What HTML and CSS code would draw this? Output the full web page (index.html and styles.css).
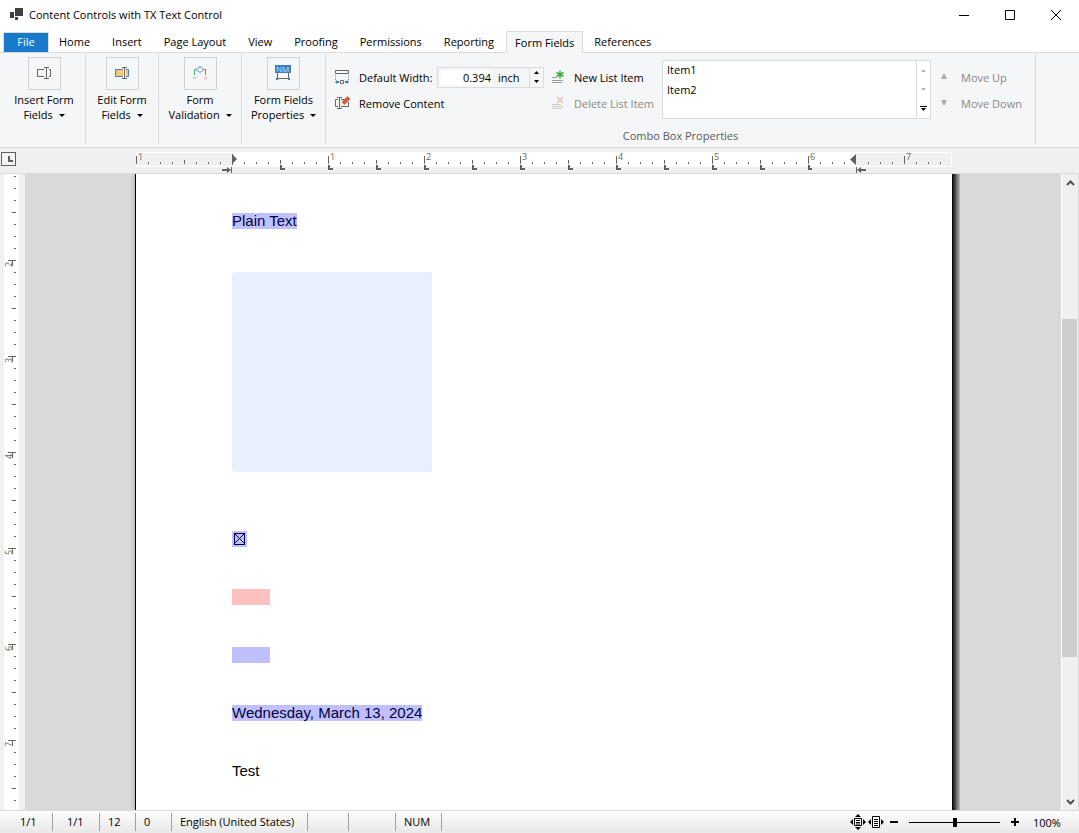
FILE: index.html
```html
<!DOCTYPE html>
<html lang="en">
<head>
  <meta charset="UTF-8">
  <meta name="viewport" content="width=device-width, initial-scale=1.0">
  <title>Content Controls with TX Text Control</title>
  <link rel="stylesheet" href="styles.css">
</head>
<body>
  <header class="titlebar">
    <svg class="app-icon" width="14" height="14" viewBox="0 0 14 14" fill="#404040">
      <path d="M0 4h4v6H0zM5 0h8v8H5zM5 9h3v3H5z"/>
    </svg>
    <h1>Content Controls with TX Text Control</h1>
    <div class="window-buttons">
      <button type="button" aria-label="Minimize">
        <svg width="12" height="12" viewBox="0 0 12 12"><path d="M1 6.500h10" stroke="#000"/></svg>
      </button>
      <button type="button" aria-label="Maximize">
        <svg width="12" height="12" viewBox="0 0 12 12"><path d="M1.500 1.500h9v9h-9z" fill="none" stroke="#000"/></svg>
      </button>
      <button type="button" aria-label="Close">
        <svg width="12" height="12" viewBox="0 0 12 12"><path d="M1 1l10 10M11 1L1 11" stroke="#000"/></svg>
      </button>
    </div>
  </header>

  <nav class="tabs">
    <button type="button" class="tab file">File</button>
    <button type="button" class="tab">Home</button>
    <button type="button" class="tab">Insert</button>
    <button type="button" class="tab">Page Layout</button>
    <button type="button" class="tab">View</button>
    <button type="button" class="tab">Proofing</button>
    <button type="button" class="tab">Permissions</button>
    <button type="button" class="tab">Reporting</button>
    <button type="button" class="tab active">Form Fields</button>
    <button type="button" class="tab">References</button>
  </nav>

  <section class="ribbon">
    <div class="group group-insert">
      <button type="button" class="big-button">
        <span class="icon-box">
          <svg width="17" height="17" viewBox="0 0 17 17" fill="none" stroke="#666">
            <path d="M8 4.500H1.500v7H8M13 4.500h1.500v7H13M10.500 2.500v11M8 2.500h5M8 13.500h5"/>
          </svg>
        </span>
        <span>Insert Form<br>Fields <i class="caret"></i></span>
      </button>
    </div>
    <div class="group group-edit">
      <button type="button" class="big-button">
        <span class="icon-box">
          <svg width="17" height="17" viewBox="0 0 17 17" fill="none">
            <path d="M1 4h8v8H1zM12 4h3v8h-3z" fill="#efc97c"/>
            <path d="M9 4.500H1.500v7H9M12 4.500h2.500v7H12" stroke="#4a7fb8"/>
            <path d="M10.500 2.500v11M8 2.500h5M8 13.500h5" stroke="#666"/>
          </svg>
        </span>
        <span>Edit Form<br>Fields <i class="caret"></i></span>
      </button>
    </div>
    <div class="group group-validation">
      <button type="button" class="big-button">
        <span class="icon-box">
          <svg width="17" height="17" viewBox="0 0 17 17" fill="none">
            <path d="M8 1.500l4 3-4 3-4-3z" stroke="#5b8fc7"/>
            <path d="M4 4.500H2.500V10" stroke="#4db84d"/>
            <path d="M1 12l1.500 2L4.500 11.500" stroke="#8fd48f"/>
            <path d="M12 4.500h1.500V10" stroke="#d9603f"/>
            <path d="M12 11.500l3 3M15 11.500l-3 3" stroke="#efac9c"/>
          </svg>
        </span>
        <span>Form<br>Validation <i class="caret"></i></span>
      </button>
    </div>
    <div class="group group-properties">
      <button type="button" class="big-button">
        <span class="icon-box">
          <svg width="17" height="17" viewBox="0 0 17 17">
            <path d="M0 0h16v8H0z" fill="#3f7fbf"/>
            <text x="1" y="7" class="icon-text">NM</text>
            <path d="M2.500 8v5.500h11V8" fill="none" stroke="#666"/>
            <path d="M1 13h2v2H1zM13 13h2v2h-2z" fill="#3f7fbf"/>
          </svg>
        </span>
        <span>Form Fields<br>Properties <i class="caret"></i></span>
      </button>
    </div>

    <div class="group combo">
      <div class="combo-body">
        <div class="column column-width">
          <div class="row">
            <svg width="16" height="16" viewBox="0 0 16 16" fill="none">
              <path d="M.5 1.500h13v3H.5z" stroke="#666"/>
              <path d="M.5 6v5M13.500 6v5" stroke="#888" stroke-dasharray="1 1"/>
              <path d="M5.500 11.500h3v3h-3z" stroke="#666"/>
              <path d="M0 13l2-2v1h2v2H2v1zM14 13l-2-2v1h-2v2h2v1z" fill="#3f7fbf"/>
            </svg>
            <label for="default-width">Default Width:</label>
            <div class="spinner">
              <input id="default-width" type="text" value="0.394">
              <span class="unit">inch</span>
              <div class="spin-buttons">
                <button type="button" aria-label="Increase"><svg width="5" height="3" viewBox="0 0 5 3"><path d="M0 3h5L2.500 0z"/></svg></button>
                <button type="button" aria-label="Decrease"><svg width="5" height="3" viewBox="0 0 5 3"><path d="M0 0h5L2.500 3z"/></svg></button>
              </div>
            </div>
          </div>
          <button type="button" class="row">
            <svg width="16" height="16" viewBox="0 0 16 16" fill="none">
              <path d="M3 4.500H.5v7H3M6 4.500h4M6 11.500h7.500V7M4.500 2.500v11M2 2.500h5M2 13.500h5" stroke="#666"/>
              <path d="M8 8.500L14 2.500" stroke="#d9603f" stroke-width="4"/>
            </svg>
            <span>Remove Content</span>
          </button>
        </div>

        <div class="column column-items">
          <button type="button" class="row">
            <svg width="16" height="16" viewBox="0 0 16 16" fill="none">
              <path d="M0 8.500h5M0 11.500h11M0 13.500h10" stroke="#999"/>
              <path d="M8 1.500v8M4.500 3.500l7 4M11.500 3.500l-7 4" stroke="#43a843" stroke-width="1.500"/>
            </svg>
            <span>New List Item</span>
          </button>
          <button type="button" class="row" disabled>
            <svg width="16" height="16" viewBox="0 0 16 16" fill="none">
              <path d="M0 9.500h9M0 11.500h11M0 13.500h10" stroke="#ccc"/>
              <path d="M5 2l6 6M11 2L5 8" stroke="#eebcb0" stroke-width="1.500"/>
            </svg>
            <span>Delete List Item</span>
          </button>
        </div>

        <div class="gallery">
          <ul>
            <li>Item1</li>
            <li>Item2</li>
          </ul>
          <div class="gallery-buttons">
            <button type="button" aria-label="Scroll up" disabled><svg width="5" height="3" viewBox="0 0 5 3"><path d="M0 3h5L2.500 0z"/></svg></button>
            <button type="button" aria-label="Scroll down" disabled><svg width="5" height="3" viewBox="0 0 5 3"><path d="M0 0h5L2.500 3z"/></svg></button>
            <button type="button" aria-label="More"><svg width="7" height="5" viewBox="0 0 7 5"><path d="M0 0h7v1H0zM1 2h5L3.500 5z"/></svg></button>
          </div>
        </div>

        <div class="column column-move">
          <button type="button" class="row" disabled>
            <svg width="16" height="16" viewBox="0 0 16 16" fill="#aaa"><path d="M1 10h6L4 4z"/></svg>
            <span>Move Up</span>
          </button>
          <button type="button" class="row" disabled>
            <svg width="16" height="16" viewBox="0 0 16 16" fill="#aaa"><path d="M1 5h6l-3 6z"/></svg>
            <span>Move Down</span>
          </button>
        </div>
      </div>
      <p class="group-title">Combo Box Properties</p>
    </div>
  </section>

  <div class="ruler">
    <button type="button" class="tab-type" aria-label="Tab type">
      <svg width="13" height="11" viewBox="0 0 13 11"><path d="M6 2h2v4h3v2H6z" fill="#606060"/></svg>
    </button>
    <svg class="ruler-scale" width="828" height="21" viewBox="0 0 828 21">
      <defs>
        <pattern id="ticks" width="96" height="21" patternUnits="userSpaceOnUse">
          <path d="M.5 4v8M48.500 8v4M12.500 10v2M24.500 10v2M36.500 10v2M60.500 10v2M72.500 10v2M84.500 10v2" stroke="#666"/>
        </pattern>
        <pattern id="stops" width="48" height="21" patternUnits="userSpaceOnUse">
          <path d="M0 13h2v3h3v2H0z" fill="#606060"/>
        </pattern>
      </defs>
      <g transform="translate(12 0)">
        <path d="M0 0h816v15H0z" fill="#fff"/>
        <path d="M1 1h95v13H1zM720 1h95v13h-95z" fill="#f0f0f0"/>
        <path d="M0 0h96v21H0zM97 0h623v21H97zM721 0h94v21h-94z" fill="url(#ticks)"/>
        <path d="M144 12h532v7H144z" fill="url(#stops)"/>
        <g class="ruler-number">
          <text x="2" y="8">1</text>
          <text x="194" y="8">1</text>
          <text x="290" y="8">2</text>
          <text x="386" y="8">3</text>
          <text x="482" y="8">4</text>
          <text x="578" y="8">5</text>
          <text x="674" y="8">6</text>
          <text x="770" y="8">7</text>
        </g>
        <path d="M96 2l5 5-5 5zM720 2l-6 5.500 6 5.500z" fill="#606060"/>
        <path d="M96.500 2v11M95.500 15v6M720.500 15v6" stroke="#606060"/>
        <path d="M86 17h5v-2l4 3-4 3v-2h-5zM730 17h-5v-2l-4 3 4 3v-2h5z" fill="#606060"/>
      </g>
    </svg>
  </div>

  <main class="workspace">
    <div class="side-ruler">
      <svg width="15" height="636" viewBox="0 0 15 636">
        <defs>
          <pattern id="side-ticks" y="86" width="15" height="96" patternUnits="userSpaceOnUse">
            <path d="M4 .5h8M8 48.500h4M10 12.500h2M10 24.500h2M10 36.500h2M10 60.500h2M10 72.500h2M10 84.500h2M8.500 0v6" stroke="#666"/>
          </pattern>
        </defs>
        <path d="M0 0h15v636H0z" fill="url(#side-ticks)"/>
        <g class="ruler-number">
          <text transform="translate(8 93) rotate(-90)">2</text>
          <text transform="translate(8 189) rotate(-90)">3</text>
          <text transform="translate(8 285) rotate(-90)">4</text>
          <text transform="translate(8 381) rotate(-90)">5</text>
          <text transform="translate(8 477) rotate(-90)">6</text>
          <text transform="translate(8 573) rotate(-90)">7</text>
        </g>
      </svg>
    </div>

    <div class="canvas">
      <article class="page">
        <p><span class="field">Plain Text</span></p>
        <div class="picture-field"></div>
        <p><input type="checkbox" class="check-field" aria-label="Check box" checked></p>
        <p><select class="drop-field required" aria-label="Combo box"><option></option></select></p>
        <p><select class="drop-field" aria-label="Drop-down list"><option></option></select></p>
        <p><span class="field">Wednesday, March 13, 2024</span></p>
        <p>Test</p>
      </article>
    </div>

    <div class="scrollbar">
      <button type="button" aria-label="Scroll up">
        <svg width="9" height="6" viewBox="0 0 9 6"><path d="M1 5l3.500-3.500L8 5" fill="none" stroke="#505050" stroke-width="2"/></svg>
      </button>
      <div class="track">
        <div class="thumb"></div>
      </div>
      <button type="button" aria-label="Scroll down">
        <svg width="9" height="6" viewBox="0 0 9 6"><path d="M1 1l3.500 3.500L8 1" fill="none" stroke="#505050" stroke-width="2"/></svg>
      </button>
    </div>
  </main>

  <footer class="statusbar">
    <span class="cell cell-page">1/1</span>
    <span class="cell cell-section">1/1</span>
    <span class="cell cell-number">12</span>
    <span class="cell cell-number">0</span>
    <span class="cell cell-language">English (United States)</span>
    <span class="cell cell-caps"></span>
    <span class="cell cell-insert"></span>
    <span class="cell cell-num">NUM</span>
    <div class="zoom">
      <button type="button" aria-label="Whole page">
        <svg width="16" height="16" viewBox="0 0 16 16">
          <path d="M4.500 4.500h7v7h-7z" fill="#fff" stroke="#000"/>
          <path d="M6 6.500h4M6 8.500h4M6 10h4" stroke="#000"/>
          <path d="M8 0l3 3H5zM8 16l3-3H5zM0 8l3-3v6zM16 8l-3-3v6z"/>
        </svg>
      </button>
      <button type="button" aria-label="Page width">
        <svg width="16" height="16" viewBox="0 0 16 16">
          <path d="M4.500 2.500h7v11h-7z" fill="#fff" stroke="#000"/>
          <path d="M6 5.500h4M6 7.500h4M6 9.500h4M6 11.500h4" stroke="#000"/>
          <path d="M0 8l3-3v6zM16 8l-3-3v6z"/>
        </svg>
      </button>
      <button type="button" aria-label="Zoom out">
        <svg width="8" height="8" viewBox="0 0 8 8"><path d="M0 3h8v2H0z"/></svg>
      </button>
      <input type="range" min="0" max="200" value="100" aria-label="Zoom">
      <button type="button" aria-label="Zoom in">
        <svg width="8" height="8" viewBox="0 0 8 8"><path d="M0 3h3V0h2v3h3v2H5v3H3V5H0z"/></svg>
      </button>
      <span class="percent">100%</span>
    </div>
  </footer>
</body>
</html>
```
FILE: styles.css
```css
* {
  margin: 0;
  padding: 0;
  box-sizing: border-box;
}

body {
  font-family: 'Open Sans', 'Noto Sans', sans-serif;
  font-size: 11px;
  line-height: 15px;
  color: #000;
  background: #fff;
  height: 100vh;
  display: flex;
  flex-direction: column;
  overflow: hidden;
}

button,
input,
select {
  font: inherit;
  color: inherit;
  background: none;
  border: none;
  border-radius: 0;
}

button:disabled {
  color: #888;
}

svg {
  display: block;
  flex: none;
  overflow: visible;
}

/* Title bar */
.titlebar {
  display: flex;
  align-items: center;
  height: 29px;
  padding-left: 10px;
}

.titlebar h1 {
  flex: 1;
  font-size: 11px;
  font-weight: 400;
  margin-left: 5px;
}

.window-buttons {
  display: flex;
}

.window-buttons button {
  width: 46px;
  height: 29px;
  display: flex;
  align-items: center;
  justify-content: center;
}

/* Tabs */
.tabs {
  display: flex;
  align-items: flex-end;
  height: 24px;
  padding-left: 3px;
  border-bottom: 1px solid #dadbdc;
}

.tab {
  height: 20px;
  padding: 0 11px 2px;
  white-space: nowrap;
}

.tab.file {
  width: 46px;
  margin-right: -1px;
  background: #1979ca;
  border: 1px solid #dadbdc;
  border-bottom: none;
  color: #fff;
}

.tab.active {
  height: 22px;
  padding: 0 8px;
  margin: 0 0 -1px 1px;
  background: #f5f6f7;
  border: 1px solid #dadbdc;
  border-bottom: none;
}

/* Ribbon */
.ribbon {
  display: flex;
  height: 95px;
  padding-bottom: 3px;
  background: #f5f6f7;
  border-bottom: 1px solid #dadbdc;
}

.group {
  border-right: 1px solid #dadbdc;
  margin-top: 1px;
  padding-top: 3px;
}

.group-insert {
  width: 86px;
  padding-left: 3px;
}

.group-edit {
  width: 73px;
}

.group-validation {
  width: 83px;
}

.group-properties {
  width: 84px;
}

.big-button {
  width: 100%;
  display: flex;
  flex-direction: column;
  align-items: center;
  gap: 2px;
  white-space: nowrap;
}

.icon-box {
  width: 33px;
  height: 33px;
  padding: 7px;
  border: 1px solid #d0d0d0;
}

.icon-text {
  font-size: 8px;
  fill: #cfe3f5;
}

.caret {
  display: inline-block;
  margin-left: 3px;
  vertical-align: 2px;
  border: 3px solid transparent;
  border-top-color: #000;
  border-bottom: none;
}

.combo {
  width: 710px;
  display: flex;
  flex-direction: column;
}

.combo-body {
  display: flex;
  padding: 3px 4px 0 9px;
}

.column {
  padding-top: 4px;
}

.column-width {
  width: 217px;
}

.column-items {
  width: 110px;
}

.column-move {
  padding-left: 9px;
}

.row {
  display: flex;
  align-items: center;
  gap: 8px;
  height: 26px;
  white-space: nowrap;
}

.column-items .row {
  gap: 6px;
}

.column-move .row {
  gap: 5px;
}

.spinner {
  width: 107px;
  height: 21px;
  margin-left: auto;
  margin-right: 8px;
  padding-left: 3px;
  display: flex;
  align-items: center;
  border: 1px solid #dadbdc;
}

.row label {
  margin-right: -8px;
}

.spinner input {
  width: 50px;
  height: 15px;
  background: #fff;
  text-align: right;
}

.unit {
  flex: 1;
  padding-left: 7px;
}

.spin-buttons {
  width: 14px;
  height: 100%;
  display: flex;
  flex-direction: column;
  border-left: 1px solid #dadbdc;
}

.spin-buttons button,
.gallery-buttons button {
  flex: 1;
  display: flex;
  align-items: center;
  justify-content: center;
}

.gallery {
  width: 269px;
  height: 59px;
  display: flex;
  background: #fff;
  border: 1px solid #dadbdc;
}

.gallery ul {
  flex: 1;
  margin-top: -1px;
  padding-left: 4px;
  list-style: none;
  line-height: 20px;
}

.gallery-buttons {
  width: 14px;
  display: flex;
  flex-direction: column;
  border-left: 1px solid #dadbdc;
}

.gallery-buttons button:disabled {
  fill: #bbb;
}

.group-title {
  margin-top: 9px;
  text-align: center;
  color: #5a5a5a;
}

/* Horizontal ruler */
.ruler {
  display: flex;
  height: 26px;
  padding: 4px 0 0 1px;
  background: #f0f0f0;
  border-bottom: 1px solid #dadada;
}

.tab-type {
  width: 15px;
  height: 14px;
  margin-right: 108px;
  background: #f5f5f5;
  border: 1px solid #606060;
}

.ruler-number {
  font-size: 9px;
  fill: #666;
}

/* Document area */
.workspace {
  flex: 1;
  min-height: 0;
  display: flex;
  background: #d9d9d9;
}

.side-ruler {
  width: 25px;
  padding-left: 4px;
  background: linear-gradient(to right, #f0f0f0 4px, #fff 4px, #fff 19px, #f0f0f0 19px);
  overflow: hidden;
}

.canvas {
  flex: 1;
  padding-left: 110px;
  overflow: hidden;
}

.page {
  width: 817px;
  height: 100%;
  padding: 39px 96px 0;
  background: #fff;
  border-left: 1px solid #000;
  box-shadow: -1px 0 4px rgba(0, 0, 0, 0.2);
  font-family: 'Liberation Sans', Arial, sans-serif;
  font-size: 15px;
  line-height: 16px;
  position: relative;
}

.page::after {
  content: '';
  position: absolute;
  top: 0;
  bottom: 0;
  left: 100%;
  width: 8px;
  background: linear-gradient(to right, #000, #bbb);
}

.page p {
  height: 16px;
  margin-bottom: 42px;
}

.field {
  display: inline-block;
  background: #c0c0ff;
  color: #000040;
}

.picture-field {
  width: 200px;
  height: 200px;
  margin: 43px 0 59px;
  background: #e8effd;
  border-radius: 3px;
}

.check-field {
  display: block;
  appearance: none;
  width: 15px;
  height: 16px;
  border: 2px solid #c0c0ff;
  border-bottom-width: 3px;
  outline: 1px solid #000040;
  outline-offset: -3px;
  background:
    linear-gradient(45deg, transparent 47%, #000040 47%, #000040 53%, transparent 53%),
    linear-gradient(-45deg, #c0c0ff 47%, #000040 47%, #000040 53%, #c0c0ff 53%);
}

.drop-field {
  display: block;
  appearance: none;
  width: 38px;
  height: 16px;
  background: #c0c0ff;
}

.drop-field.required {
  background: #ffc0c0;
}

/* Scrollbar */
.scrollbar {
  width: 18px;
  display: flex;
  flex-direction: column;
  background: #f0f0f0;
  border-left: 1px solid #fff;
  border-right: 1px solid #dadada;
}

.scrollbar button {
  height: 17px;
  display: flex;
  align-items: center;
  justify-content: center;
}

.track {
  flex: 1;
  display: flex;
  flex-direction: column;
  padding-right: 1px;
}

.track::before {
  content: '';
  flex: 128;
}

.track::after {
  content: '';
  flex: 136;
}

.thumb {
  flex: 338;
  background: #cdcdcd;
}

/* Status bar */
.statusbar {
  display: flex;
  align-items: center;
  height: 23px;
  border-top: 1px solid #dadada;
  background: linear-gradient(#fdfdfd, #e8e8e8);
}

.cell {
  height: 18px;
  padding-left: 8px;
  line-height: 18px;
  white-space: nowrap;
  border-right: 1px solid #a0a0a0;
}

.cell-page {
  width: 53px;
  padding-left: 20px;
}

.cell-section {
  width: 47px;
  padding-left: 14px;
}

.cell-number {
  width: 36px;
}

.cell-language {
  width: 136px;
}

.cell-caps {
  width: 41px;
}

.cell-insert {
  width: 47px;
}

.cell-num {
  width: 46px;
}

.zoom {
  display: flex;
  align-items: center;
  margin-left: auto;
  padding-right: 16px;
}

.zoom button + button {
  margin-left: 2px;
}

.zoom button:nth-child(3) {
  margin-left: 6px;
}

.zoom input {
  appearance: none;
  width: 91px;
  height: 10px;
  margin: 0 11px;
}

.zoom input::-webkit-slider-runnable-track {
  height: 1px;
  background: #000;
}

.zoom input::-webkit-slider-thumb {
  appearance: none;
  width: 4px;
  height: 9px;
  margin-top: -4px;
  background: #000;
}

.percent {
  width: 30px;
  margin-left: 14px;
}
```
